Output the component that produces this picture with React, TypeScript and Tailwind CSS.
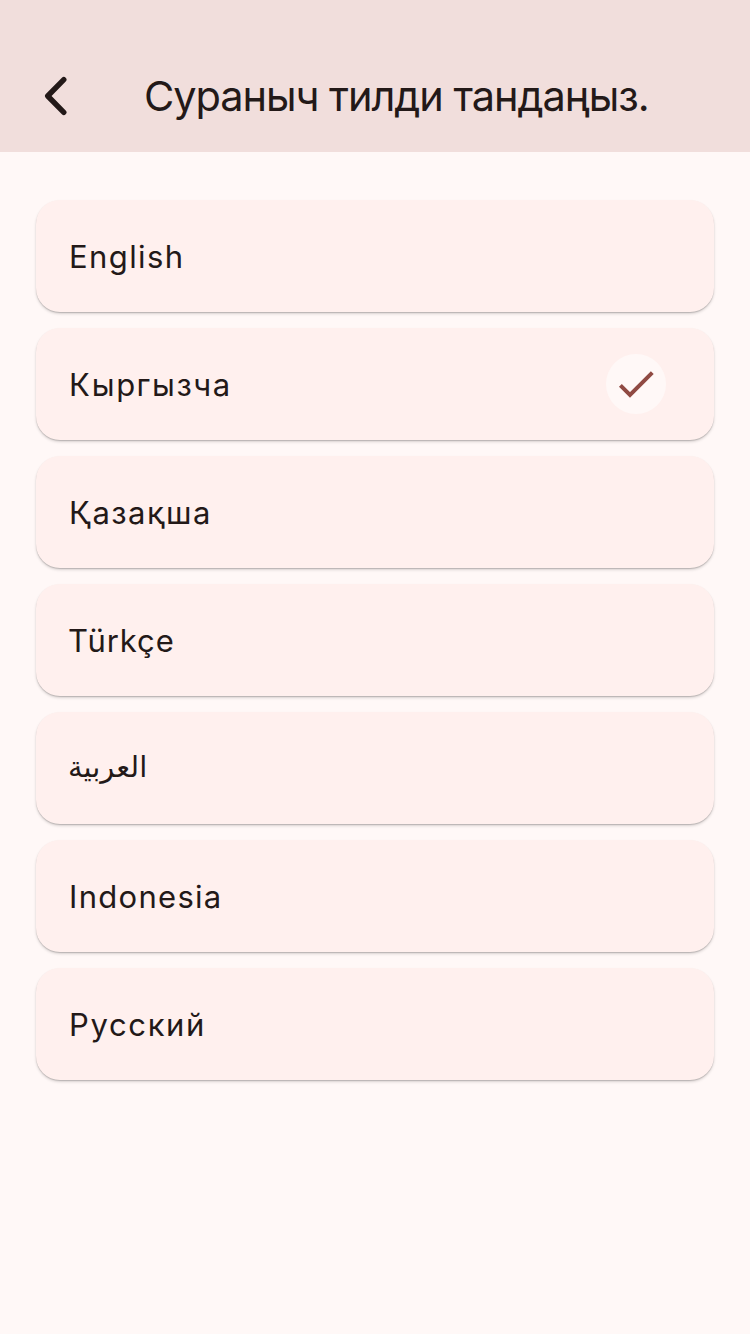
const items = [
  { label: "English", style: "text-[31px] tracking-[1.4px] pl-px" },
  { label: "Кыргызча", style: "text-[31px] tracking-[1.5px] pl-px", selected: true },
  { label: "Қазақша", style: "text-[31px] tracking-[1.5px] pl-px" },
  { label: "Türkçe", style: "text-[31px] tracking-[0.95px]" },
  { label: "العربية", style: "text-[29px] pb-1" },
  { label: "Indonesia", style: "text-[31px] tracking-[1.3px] pl-px" },
  { label: "Русский", style: "text-[31px] tracking-[1.65px] pl-px" },
];

export default function App() {
  return (
    <div className="flex h-[1334px] w-[750px] flex-col bg-[#fff8f7] font-['Inter','DejaVu_Sans',sans-serif] text-[#231918]">
      <header className="flex h-[152px] items-end bg-[#f1dedc]">
        <button aria-label="Back" className="flex h-28 w-28 items-center justify-center">
          <svg width="112" height="112" viewBox="0 0 112 112" fill="none" stroke="#231918" strokeWidth="5.4" strokeLinecap="round" strokeLinejoin="round">
            <path d="M63.8 39.7 L47.7 56 L63.8 72.3" />
          </svg>
        </button>
        <h1 className="flex h-28 items-center pl-8 text-[41.5px] font-normal tracking-[-1.05px] whitespace-nowrap">Сураныч тилди тандаңыз.</h1>
      </header>
      <main className="flex flex-col gap-4 px-9 pt-12">
        {items.map((item) => (
          <button key={item.label} className="flex h-28 items-center justify-between rounded-[24px] bg-[#fff0ee] pr-12 pl-8 shadow-[0_1px_1px_rgba(0,0,0,0.17),0_2px_3px_rgba(0,0,0,0.14)]">
            <span className={`pt-0.5 font-normal ${item.style}`}>{item.label}</span>
            {item.selected && (
              <span className="flex size-[60px] items-center justify-center rounded-full bg-[#fff8f7]">
                <svg width="60" height="60" viewBox="0 0 60 60" fill="none" stroke="#904a43" strokeWidth="4">
                  <path d="M14.4 31.4 L24 41 L46.3 18.7" />
                </svg>
              </span>
            )}
          </button>
        ))}
      </main>
    </div>
  );
}
